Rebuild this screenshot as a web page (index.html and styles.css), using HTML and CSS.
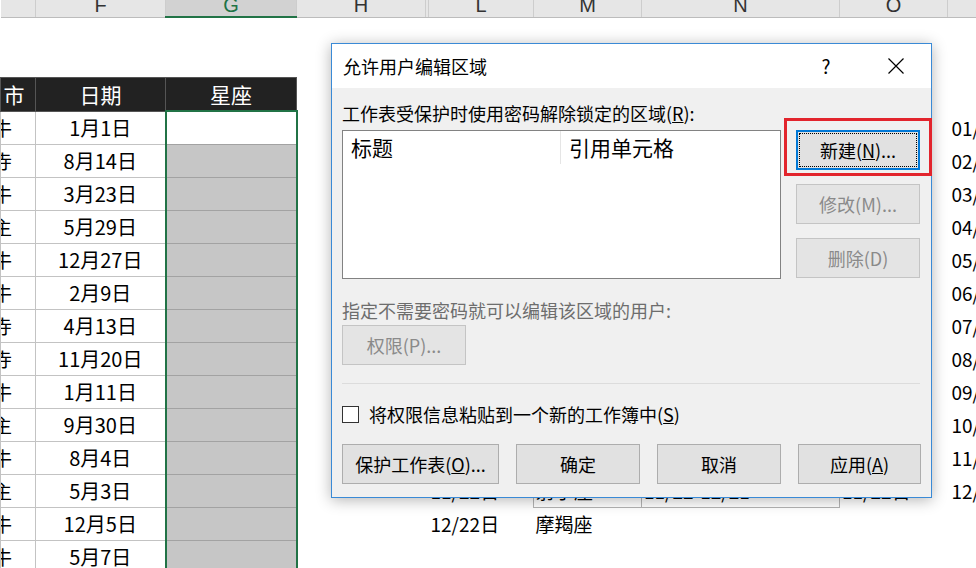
FILE: index.html
```html
<!DOCTYPE html>
<html lang="zh-CN">
  <head>
    <meta charset="UTF-8" />
    <meta name="viewport" content="width=device-width, initial-scale=1.0" />
    <title>允许用户编辑区域</title>
    <link rel="stylesheet" href="styles.css">
  </head>
  <body>
    <table class="grid">
      <colgroup>
        <col class="w-e"><col class="w-f"><col class="w-g"><col class="w-h"><col class="w-x">
        <col class="w-l"><col class="w-m"><col class="w-n"><col class="w-o"><col class="w-p">
      </colgroup>
      <tr class="letters">
        <th></th><th>F</th><th class="sel">G</th><th>H</th><th></th>
        <th>L</th><th>M</th><th>N</th><th>O</th><th></th>
      </tr>
      <tr class="gap"><td colspan="10"></td></tr>
      <tr>
        <td class="hd e">市</td><td class="hd">日期</td><td class="hd">星座</td>
        <td></td><td></td><td></td><td></td><td></td><td></td><td></td>
      </tr>
      <tr><td class="e">牛</td><td class="f">1月1日</td><td class="g act"></td><td></td><td></td><td></td><td></td><td></td><td></td><td class="p">01/20日</td></tr>
      <tr><td class="e">寺</td><td class="f">8月14日</td><td class="g"></td><td></td><td></td><td></td><td></td><td></td><td></td><td class="p">02/19日</td></tr>
      <tr><td class="e">牛</td><td class="f">3月23日</td><td class="g"></td><td></td><td></td><td></td><td></td><td></td><td></td><td class="p">03/21日</td></tr>
      <tr><td class="e">主</td><td class="f">5月29日</td><td class="g"></td><td></td><td></td><td></td><td></td><td></td><td></td><td class="p">04/20日</td></tr>
      <tr><td class="e">牛</td><td class="f">12月27日</td><td class="g"></td><td></td><td></td><td></td><td></td><td></td><td></td><td class="p">05/21日</td></tr>
      <tr><td class="e">牛</td><td class="f">2月9日</td><td class="g"></td><td></td><td></td><td></td><td></td><td></td><td></td><td class="p">06/22日</td></tr>
      <tr><td class="e">寺</td><td class="f">4月13日</td><td class="g"></td><td></td><td></td><td></td><td></td><td></td><td></td><td class="p">07/23日</td></tr>
      <tr><td class="e">寺</td><td class="f">11月20日</td><td class="g"></td><td></td><td></td><td></td><td></td><td></td><td></td><td class="p">08/23日</td></tr>
      <tr><td class="e">牛</td><td class="f">1月11日</td><td class="g"></td><td></td><td></td><td></td><td></td><td></td><td></td><td class="p">09/23日</td></tr>
      <tr><td class="e">主</td><td class="f">9月30日</td><td class="g"></td><td></td><td></td><td></td><td></td><td></td><td></td><td class="p">10/24日</td></tr>
      <tr><td class="e">牛</td><td class="f">8月4日</td><td class="g"></td><td></td><td></td><td></td><td></td><td></td><td></td><td class="p">11/23日</td></tr>
      <tr>
        <td class="e">主</td><td class="f">5月3日</td><td class="g"></td><td></td><td></td>
        <td class="txt">11/22日</td><td class="txt bx">射手座</td><td class="txt bx">11/22-12/21</td><td class="txt">11/22日</td><td class="p">12/22日</td>
      </tr>
      <tr>
        <td class="e">牛</td><td class="f">12月5日</td><td class="g"></td><td></td><td></td>
        <td class="txt">12/22日</td><td class="txt">摩羯座</td><td></td><td></td><td></td>
      </tr>
      <tr><td class="e">牛</td><td class="f">5月7日</td><td class="g"></td><td></td><td></td><td></td><td></td><td></td><td></td><td></td></tr>
    </table>

    <div class="dialog">
      <div class="titlebar">
        <span class="title">允许用户编辑区域</span>
        <span class="help">?</span>
        <span class="close">
          <svg width="16" height="16" viewBox="0 0 16 16">
            <path d="M0.5 0.5 L15.5 15.5 M15.5 0.5 L0.5 15.5" stroke="#000" stroke-width="1.2" fill="none" />
          </svg>
        </span>
      </div>
      <div class="body">
        <div class="label">工作表受保护时使用密码解除锁定的区域(<u>R</u>):</div>
        <div class="main">
          <div class="list">
            <div class="list-head">
              <span class="col1">标题</span>
              <span class="col2">引用单元格</span>
            </div>
          </div>
          <div class="side">
            <button class="btn focus"><span>新建(<u>N</u>)...</span></button>
            <button class="btn" disabled>修改(M)...</button>
            <button class="btn" disabled>删除(D)</button>
          </div>
        </div>
        <div class="label muted">指定不需要密码就可以编辑该区域的用户:</div>
        <button class="btn perm" disabled>权限(P)...</button>
        <div class="sep"></div>
        <label class="check"><span class="box"></span>将权限信息粘贴到一个新的工作簿中(<u>S</u>)</label>
        <div class="actions">
          <button class="btn wide">保护工作表(<u>O</u>)...</button>
          <button class="btn">确定</button>
          <button class="btn">取消</button>
          <button class="btn">应用(<u>A</u>)</button>
        </div>
      </div>
      <div class="mark"></div>
    </div>
  </body>
</html>
```

FILE: styles.css
```css
body {
  margin: 0;
  width: 976px;
  height: 568px;
  overflow: hidden;
  position: relative;
  background-color: #fff;
  font-family: "Noto Sans CJK SC", "Liberation Sans", sans-serif;
  color: #000;
}

/* sheet */
.grid {
  table-layout: fixed;
  border-collapse: collapse;
  width: 1007px;
  font-size: 19px;
}
.w-e { width: 35px; }
.w-f { width: 130px; }
.w-g { width: 131px; }
.w-h { width: 129px; }
.w-x { width: 3px; }
.w-l { width: 105px; }
.w-m { width: 108px; }
.w-n { width: 198px; }
.w-o { width: 108px; }
.w-p { width: 60px; }
.grid td {
  padding: 0;
  height: 32px;
  line-height: 22px;
  white-space: nowrap;
  overflow: hidden;
  vertical-align: middle;
}
.letters th {
  height: 16px;
  padding: 0;
  background-color: #e6e6e6;
  border-right: 1px solid #cdcdcd;
  border-bottom: 1px solid #bcbcbc;
  font-family: "Liberation Sans", sans-serif;
  font-weight: normal;
  font-size: 20px;
  line-height: 10px;
  color: #333;
  vertical-align: top;
  overflow: hidden;
}
.letters th.sel {
  background-color: #d2d2d2;
  color: #217346;
  border-bottom: 2px solid #217346;
}
.grid tr.gap td {
  height: 59px;
}
.grid td.hd {
  background-color: #222;
  color: #fff;
  text-align: center;
  font-size: 21px;
  border: 1px solid #555;
}
.grid td.e {
  text-indent: -8px;
  border: 1px solid #c3c3c3;
}
.grid td.hd.e {
  border-color: #555;
}
.grid td.f {
  text-align: center;
  font-size: 20px;
  border: 1px solid #c3c3c3;
}
.grid td.g {
  background-color: #c6c6c6;
  border-left: 2px solid #217346;
  border-right: 2px solid #217346;
  border-bottom: 1px solid #a2a2a2;
}
.grid td.g.act {
  background-color: #fff;
  border-top: 2px solid #217346;
}
.grid td.p {
  padding-left: 4px;
}
.grid td.txt {
  padding-left: 2px;
}
.grid td.bx {
  border: 1px solid #b4b4b4;
}

/* dialog */
.dialog {
  position: absolute;
  left: 331px;
  top: 43px;
  width: 601px;
  height: 455px;
  box-sizing: border-box;
  border: 1px solid #3a8ad6;
  background-color: #f0f0f0;
  box-shadow: 0 2px 14px rgba(0, 0, 0, 0.3);
  display: flex;
  flex-direction: column;
  font-size: 18px;
}
.titlebar {
  height: 44px;
  background-color: #fff;
  display: flex;
  align-items: center;
}
.title {
  padding-left: 11px;
  line-height: 24px;
}
.help {
  margin-left: auto;
  width: 24px;
  margin-right: 35px;
  text-align: center;
  font-size: 19px;
  line-height: 24px;
}
.close {
  width: 46px;
  margin-right: 12px;
  display: flex;
  justify-content: center;
}
.body {
  flex: 1;
  padding: 13px 11px 0 10px;
  display: flex;
  flex-direction: column;
  align-items: flex-start;
}
.label {
  line-height: 24px;
  height: 24px;
}
.label.muted {
  margin-top: 19px;
  color: #6d6d6d;
}
.main {
  margin-top: 5px;
  display: flex;
}
.list {
  width: 439px;
  height: 149px;
  box-sizing: border-box;
  border: 1px solid #828282;
  background-color: #fff;
}
.list-head {
  display: flex;
  height: 33px;
  font-size: 21px;
  line-height: 33px;
}
.col1 {
  width: 209px;
  padding-left: 8px;
  border-right: 1px solid #e5e5e5;
}
.col2 {
  padding-left: 8px;
}
.side {
  margin-left: 15px;
  display: flex;
  flex-direction: column;
  gap: 14px;
}
.btn {
  width: 124px;
  height: 40px;
  box-sizing: border-box;
  padding: 0;
  border: 1px solid #adadad;
  background-color: #e1e1e1;
  font-family: inherit;
  font-size: 18px;
  color: #000;
}
.btn:disabled {
  background-color: #e4e4e4;
  border-color: #c4c4c4;
  color: #8a8a8a;
}
.btn.focus {
  border: 2px solid #0078d7;
  padding: 1px;
}
.btn.focus span {
  display: flex;
  height: 100%;
  align-items: center;
  justify-content: center;
  box-sizing: border-box;
  border: 1px dotted #000;
}
.btn.perm {
  margin-top: 3px;
}
.sep {
  margin-top: 18px;
  align-self: stretch;
  height: 1px;
  background-color: #dcdcdc;
}
.check {
  margin-top: 18px;
  display: flex;
  align-items: center;
  line-height: 24px;
}
.box {
  width: 15px;
  height: 15px;
  margin-right: 10px;
  background-color: #fff;
  border: 1px solid #333;
}
.actions {
  margin-top: 18px;
  display: flex;
  gap: 17px;
}
.btn.wide {
  width: 157px;
}
.actions .btn:last-child {
  width: 123px;
}
.mark {
  position: absolute;
  left: 452px;
  top: 74px;
  width: 148px;
  height: 58px;
  box-sizing: border-box;
  border: 3px solid #e2242c;
}
```
